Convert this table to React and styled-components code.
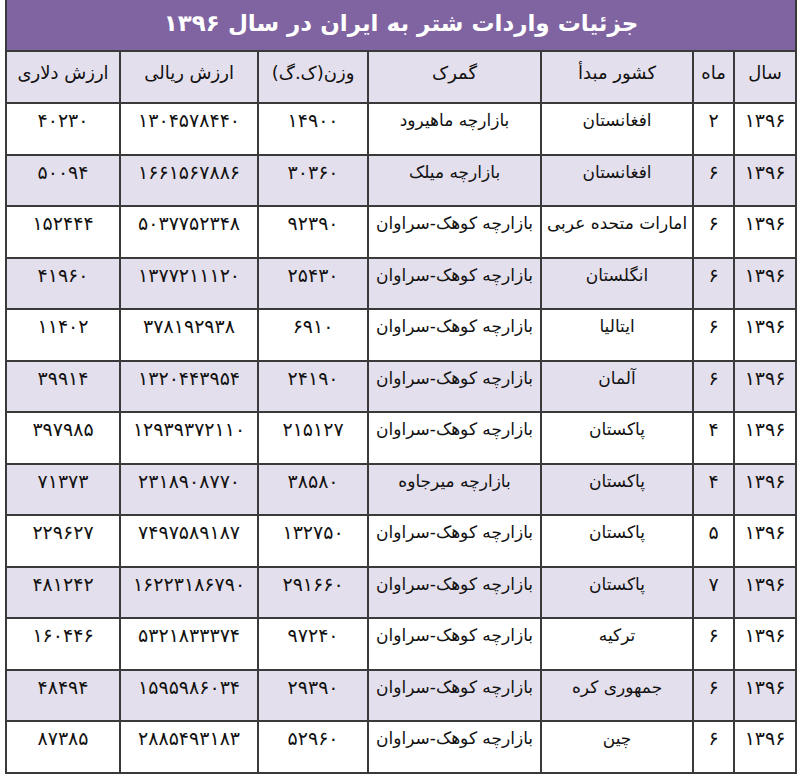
import React from 'react';
import styled, { createGlobalStyle } from 'styled-components';

const GlobalStyle = createGlobalStyle`
  body {
    margin: 0;
    background: #fff;
    font-family: "DejaVu Sans", "Noto Sans", sans-serif;
  }
`;

const columns = [
  { title: 'سال', width: 62 },
  { title: 'ماه', width: 41 },
  { title: 'کشور مبدأ', width: 152 },
  { title: 'گمرک', width: 173 },
  { title: 'وزن(ک.گ)', width: 110 },
  { title: 'ارزش ریالی', width: 138 },
  { title: 'ارزش دلاری', width: 114 },
];

// columns holding words, the rest are numbers
const wordCols = [2, 3];

const KS = 'بازارچه کوهک-سراوان';

const rows = [
  ['۱۳۹۶', '۲', 'افغانستان', 'بازارچه ماهیرود', '۱۴۹۰۰', '۱۳۰۴۵۷۸۴۴۰', '۴۰۲۳۰'],
  ['۱۳۹۶', '۶', 'افغانستان', 'بازارچه میلک', '۳۰۳۶۰', '۱۶۶۱۵۶۷۸۸۶', '۵۰۰۹۴'],
  ['۱۳۹۶', '۶', 'امارات متحده عربی', KS, '۹۲۳۹۰', '۵۰۳۷۷۵۲۳۴۸', '۱۵۲۴۴۴'],
  ['۱۳۹۶', '۶', 'انگلستان', KS, '۲۵۴۳۰', '۱۳۷۷۲۱۱۱۲۰', '۴۱۹۶۰'],
  ['۱۳۹۶', '۶', 'ایتالیا', KS, '۶۹۱۰', '۳۷۸۱۹۲۹۳۸', '۱۱۴۰۲'],
  ['۱۳۹۶', '۶', 'آلمان', KS, '۲۴۱۹۰', '۱۳۲۰۴۴۳۹۵۴', '۳۹۹۱۴'],
  ['۱۳۹۶', '۴', 'پاکستان', KS, '۲۱۵۱۲۷', '۱۲۹۳۹۳۷۲۱۱۰', '۳۹۷۹۸۵'],
  ['۱۳۹۶', '۴', 'پاکستان', 'بازارچه میرجاوه', '۳۸۵۸۰', '۲۳۱۸۹۰۸۷۷۰', '۷۱۳۷۳'],
  ['۱۳۹۶', '۵', 'پاکستان', KS, '۱۳۲۷۵۰', '۷۴۹۷۵۸۹۱۸۷', '۲۲۹۶۲۷'],
  ['۱۳۹۶', '۷', 'پاکستان', KS, '۲۹۱۶۶۰', '۱۶۲۲۳۱۸۶۷۹۰', '۴۸۱۲۴۲'],
  ['۱۳۹۶', '۶', 'ترکیه', KS, '۹۷۲۴۰', '۵۳۲۱۸۳۳۳۷۴', '۱۶۰۴۴۶'],
  ['۱۳۹۶', '۶', 'جمهوری کره', KS, '۲۹۳۹۰', '۱۵۹۵۹۸۶۰۳۴', '۴۸۴۹۴'],
  ['۱۳۹۶', '۶', 'چین', KS, '۵۲۹۶۰', '۲۸۸۵۴۹۳۱۸۳', '۸۷۳۸۵'],
];

const Wrap = styled.div`
  padding: 0 4px 0 5px;
`;

const Table = styled.table`
  direction: rtl;
  width: 791px;
  border-collapse: collapse;
  table-layout: fixed;
  color: #111;
`;

const TitleRow = styled.tr`
  height: 51px;
`;

const TitleCell = styled.th`
  background: #8064a2;
  color: #fff;
  font-size: 23px;
  font-weight: bold;
  line-height: 28px;
  text-align: center;
  vertical-align: middle;
  border: 2px solid #3a3a3a;
  border-top: none;
  padding: 0 0 4px;
`;

const HeadRow = styled.tr`
  height: 52px;
`;

const HeadCell = styled.th`
  background: #e4dfec;
  font-size: 18px;
  font-weight: normal;
  line-height: 24px;
  text-align: center;
  vertical-align: top;
  padding: 9px 2px 0;
  border: 2px solid #3a3a3a;
  white-space: nowrap;
`;

const Row = styled.tr`
  height: 51.5px;
  background: ${(p) => (p.$shaded ? '#e4dfec' : '#fff')};
`;

const Cell = styled.td`
  font-size: ${(p) => (p.$word ? '17px' : '19px')};
  line-height: 22px;
  text-align: center;
  vertical-align: top;
  padding: 5px 2px 0;
  border: 2px solid #3a3a3a;
  white-space: nowrap;
  overflow: hidden;
`;

export default function App() {
  return (
    <Wrap>
      <GlobalStyle />
      <Table>
        <colgroup>
          {columns.map((c) => (
            <col key={c.title} style={{ width: c.width }} />
          ))}
        </colgroup>
        <thead>
          <TitleRow>
            <TitleCell colSpan={7}>جزئیات واردات شتر به ایران در سال ۱۳۹۶</TitleCell>
          </TitleRow>
          <HeadRow>
            {columns.map((c) => (
              <HeadCell key={c.title}>{c.title}</HeadCell>
            ))}
          </HeadRow>
        </thead>
        <tbody>
          {rows.map((r, i) => (
            <Row key={i} $shaded={i % 2 === 1}>
              {r.map((v, j) => (
                <Cell key={j} $word={wordCols.includes(j)}>{v}</Cell>
              ))}
            </Row>
          ))}
        </tbody>
      </Table>
    </Wrap>
  );
}
